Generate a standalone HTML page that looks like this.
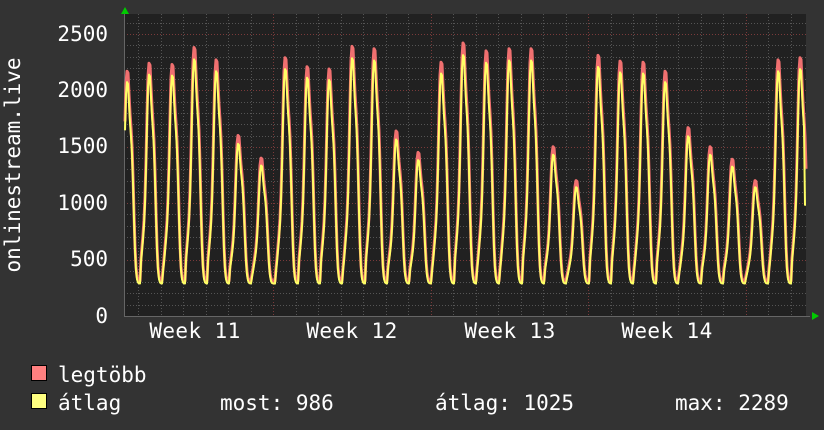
<!DOCTYPE html>
<html><head><meta charset="utf-8"><style>
html,body{margin:0;padding:0;background:#333333;}
body{width:824px;height:430px;position:relative;overflow:hidden;font-family:"DejaVu Sans Mono","Liberation Mono",monospace;color:#fff;}
svg{position:absolute;left:0;top:0}
</style></head><body>
<svg id="g" width="824" height="430" xmlns="http://www.w3.org/2000/svg" font-family="DejaVu Sans Mono, Liberation Mono, monospace" font-size="21" fill="#fff">
<rect x="124" y="14" width="682" height="302" fill="#212121"/>
<g id="grid"></g>
<g id="data"></g>
<polygon points="121,14 129,14 125,7" fill="#00cc00"/>
<polygon points="812,312 812,320 819,316" fill="#00cc00"/>
<g text-anchor="end">
<text x="108" y="323">0</text>
<text x="108" y="266">500</text>
<text x="108" y="210">1000</text>
<text x="108" y="153">1500</text>
<text x="108" y="97">2000</text>
<text x="108" y="41">2500</text>
</g>
<text transform="translate(20,165) rotate(-90)" text-anchor="middle">onlinestream.live</text>
<g text-anchor="middle" letter-spacing="0.4">
<text x="195" y="338">Week 11</text>
<text x="352" y="338">Week 12</text>
<text x="510" y="338">Week 13</text>
<text x="667" y="338">Week 14</text>
</g>
<rect x="31.5" y="365.5" width="15" height="15" fill="#ff8080" stroke="#000"/>
<rect x="31.5" y="393.5" width="15" height="15" fill="#ffff80" stroke="#000"/>
<text x="58" y="382">legtöbb</text>
<text x="58" y="410">átlag</text>
<text x="220" y="410">most: 986</text>
<text x="435" y="410">átlag: 1025</text>
<text x="675" y="410">max: 2289</text>
</svg>
<script>
var ns="http://www.w3.org/2000/svg";
function el(p,t,a){var e=document.createElementNS(ns,t);for(var k in a)e.setAttribute(k,a[k]);p.appendChild(e);return e;}
var grid=document.getElementById('grid'),data=document.getElementById('data');
function Y(v){return 316-v*0.1128;}
for(var v=100;v<=2600;v+=100){var y=Math.round(Y(v))+0.5;var maj=v%500==0;
el(grid,'line',{x1:124,x2:806,y1:y,y2:y,stroke:maj?'#7a3a3a':'#555','stroke-dasharray':'1,2','stroke-width':1});}
for(var x=138;x<806;x+=22.5){var xx=Math.round(x)+0.5;var maj=Math.abs(((x-273)%157.5))<1;
el(grid,'line',{x1:xx,x2:xx,y1:14,y2:316,stroke:maj?'#7a3a3a':'#555','stroke-dasharray':'1,2','stroke-width':1});}
el(grid,'line',{x1:124,x2:810,y1:316.5,y2:316.5,stroke:'#666'});
el(grid,'line',{x1:124.5,x2:124.5,y1:10,y2:316,stroke:'#666'});
var peaks=[[127,2170],[149,2240],[172,2230],[194,2380],[216,2270],[238,1600],[261,1400],[285,2290],[307,2210],[329,2190],[352,2390],[374,2370],[396,1640],[418,1450],[441,2250],[463,2420],[486,2350],[509,2370],[531,2370],[553,1500],[576,1200],[598,2310],[620,2260],[643,2250],[665,2170],[688,1670],[710,1500],[732,1390],[755,1200],[778,2270],[800,2290]];
function val(x){var best=peaks[0],d=1e9;for(var i=0;i<peaks.length;i++){var dd=x-peaks[i][0];if(Math.abs(dd-2)<Math.abs(d-2)){d=dd;best=peaks[i];}}
var P=best[1],tr=310;var f=Math.exp(-Math.pow(d/3.6,2))+0.5*Math.exp(-Math.pow((d-5)/2.8,2))+0.15*Math.exp(-Math.pow((d+6)/3,2));
return tr+(P-tr)*Math.min(1,f);}
var pm='',pa='';
for(var x=125;x<=806;x+=1){var v=val(x);var a=v*0.96-10;if(x>804)a=986;
pm+=(x==125?'M':'L')+x+','+Y(v).toFixed(1);pa+=(x==125?'M':'L')+x+','+Y(a).toFixed(1);}
el(data,'path',{d:pm,stroke:'#f07070',fill:'none','stroke-width':3,'stroke-linejoin':'round'});
el(data,'path',{d:pa,stroke:'#ffff66',fill:'none','stroke-width':2,'stroke-linejoin':'round'});
</script>
</body></html>
